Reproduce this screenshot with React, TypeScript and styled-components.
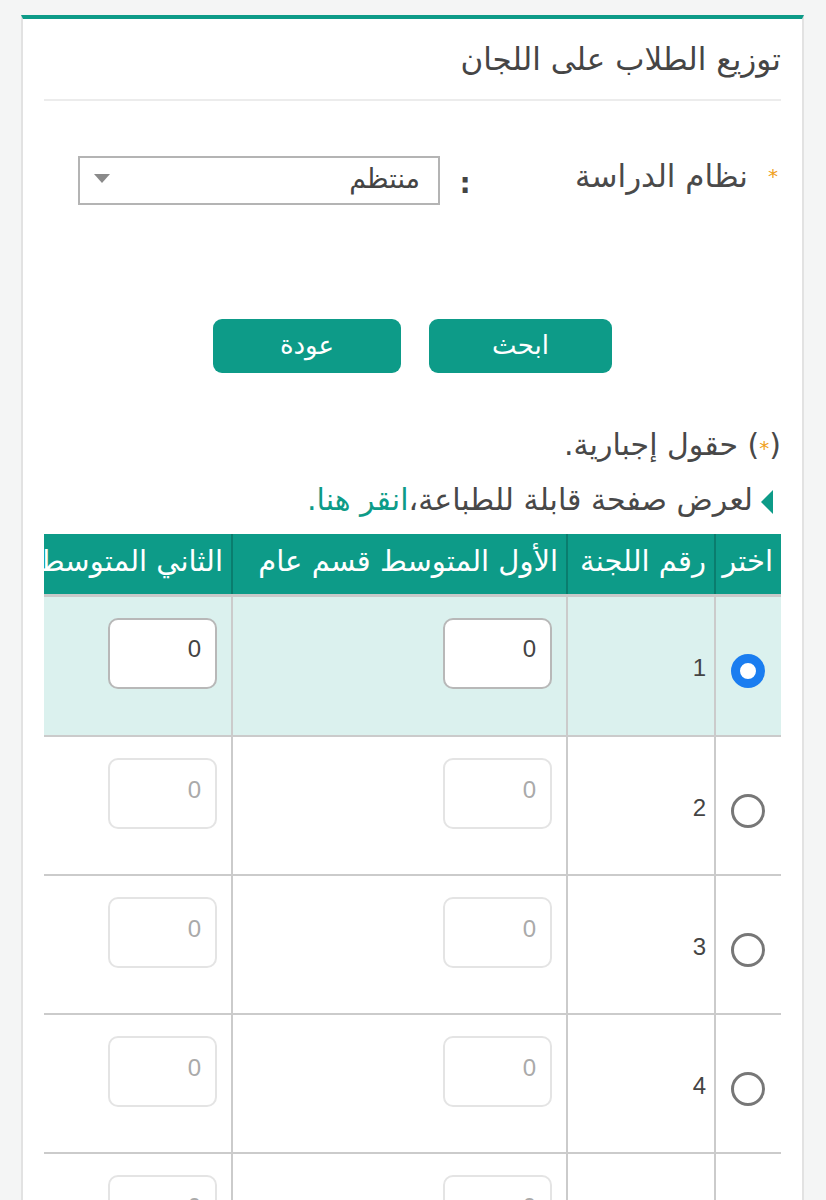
import React, { useState } from "react";
import styled, { createGlobalStyle } from "styled-components";

const GlobalStyle = createGlobalStyle`
  html, body {
    margin: 0;
    padding: 0;
    background: #f4f5f5;
  }
  body {
    font-family: "DejaVu Sans", sans-serif;
  }
`;

const TEAL = "#0d9b88";

const Page = styled.div`
  direction: rtl;
  padding: 15px 22px 0 21px;
  height: 1200px;
  box-sizing: border-box;
  overflow: hidden;
`;

const Card = styled.div`
  background: #fff;
  border-top: 4px solid ${TEAL};
  border-left: 2px solid #e2e2e2;
  border-right: 2px solid #e2e2e2;
  padding: 0 21px;
  min-height: 1300px;
`;

const Title = styled.h1`
  margin: 0;
  padding: 19px 0 19px;
  font-size: 31px;
  font-weight: normal;
  color: #454545;
  line-height: 42px;
  border-bottom: 2px solid #ececec;
`;

const FormRow = styled.div`
  display: grid;
  grid-template-columns: 291px 50px 362px;
  align-items: center;
  margin-top: 55px;
`;

const Label = styled.label`
  font-size: 31px;
  color: #4a4a4a;
  display: flex;
  gap: 20px;
  align-items: center;
  padding: 0 3px 10px 0;
`;

const Star = styled.span`
  color: #f0a020;
  font-size: 20px;
`;

const Colon = styled.span`
  font-size: 28px;
  color: #444;
  text-align: center;
  font-weight: bold;
  padding-top: 6px;
`;

const SelectBox = styled.div`
  height: 49px;
  box-sizing: border-box;
  border: 2px solid #b4b4b4;
  display: flex;
  align-items: center;
  justify-content: space-between;
  padding: 0 18px 4px 14px;
  font-size: 27px;
  color: #444;
`;

const Arrow = styled.span`
  width: 0;
  height: 0;
  border-left: 8px solid transparent;
  border-right: 8px solid transparent;
  border-top: 9px solid #8a8a8a;
`;

const ButtonRow = styled.div`
  display: flex;
  justify-content: center;
  gap: 28px;
  margin-top: 114px;
`;

const Button = styled.button<{ $w: number }>`
  width: ${(p) => p.$w}px;
  height: 54px;
  border: none;
  border-radius: 9px;
  background: ${TEAL};
  color: #fff;
  font-family: "DejaVu Sans", sans-serif;
  font-size: 26px;
  padding-bottom: 4px;
`;

const Note = styled.p`
  margin: 50px 0 0;
  font-size: 30px;
  color: #484848;
  line-height: 44px;
`;

const PrintLine = styled.p`
  margin: 8px 0 0;
  font-size: 30px;
  color: #484848;
  line-height: 44px;
  display: flex;
  align-items: center;
  gap: 8px;
  padding-right: 8px;
`;

const Pointer = styled.span`
  width: 0;
  height: 0;
  border-top: 12px solid transparent;
  border-bottom: 12px solid transparent;
  border-right: 12px solid ${TEAL};
  margin-top: 4px;
`;

const Link = styled.a`
  color: ${TEAL};
  text-decoration: none;
`;

const TableWrap = styled.div`
  margin-top: 12px;
  overflow: hidden;
  direction: rtl;
`;

const Table = styled.table`
  border-collapse: collapse;
  table-layout: fixed;
  width: 884px;
`;

const Th = styled.th<{ $w: number }>`
  width: ${(p) => p.$w}px;
  height: 61px;
  background: ${TEAL};
  color: #fff;
  font-weight: normal;
  font-size: 29px;
  text-align: right;
  padding: 0 8px 6px;
  white-space: nowrap;
  overflow: hidden;
  border-left: 2px solid #0a7d6e;
  border-bottom: 3px solid #c9c9c9;
  box-sizing: border-box;
`;

const Tr = styled.tr<{ $active: boolean }>`
  height: 139px;
  background: ${(p) => (p.$active ? "#dbf1ee" : "#fff")};
  &:first-child {
    height: 141px;
  }
`;

const Td = styled.td<{ $top?: boolean }>`
  border: 2px solid #cbcbcb;
  border-top: none;
  vertical-align: ${(p) => (p.$top ? "top" : "middle")};
  padding: ${(p) => (p.$top ? "21px 14px 0" : "0 8px")};
  text-align: right;
  font-family: "Liberation Sans", "DejaVu Sans", sans-serif;
  font-size: 24px;
  color: #444;
  &:first-child {
    border-right: none;
  }
`;

const NumInput = styled.input<{ $off: boolean }>`
  width: 109px;
  height: 71px;
  box-sizing: border-box;
  border-radius: 10px;
  border: 2px solid ${(p) => (p.$off ? "#e4e4e4" : "#b8b8b8")};
  background: #fff;
  text-align: right;
  padding: 0 14px 8px;
  font-family: "Liberation Sans", sans-serif;
  font-size: 24px;
  color: ${(p) => (p.$off ? "#aaa" : "#444")};
  outline: none;
`;

const Radio = styled.span<{ $on: boolean }>`
  display: inline-block;
  width: 34px;
  height: 34px;
  box-sizing: border-box;
  border-radius: 50%;
  margin: 16px 8px 0 0;
  border: ${(p) => (p.$on ? "9px solid #1a7df0" : "3px solid #777")};
  background: #fff;
  cursor: pointer;
`;

const RadioCell = styled(Td)`
  padding: 0 8px 0 0;
  text-align: right;
`;

const NumCell = styled(Td)`
  padding-top: 4px;
`;

const rows = [1, 2, 3, 4, 5];

export default function App() {
  const [selected, setSelected] = useState(1);
  return (
    <Page>
      <GlobalStyle />
      <Card>
        <Title>توزيع الطلاب على اللجان</Title>
        <FormRow>
          <Label>
            <Star>*</Star>
            نظام الدراسة
          </Label>
          <Colon>:</Colon>
          <SelectBox>
            <span>منتظم</span>
            <Arrow />
          </SelectBox>
        </FormRow>
        <ButtonRow>
          <Button $w={183}>ابحث</Button>
          <Button $w={188}>عودة</Button>
        </ButtonRow>
        <Note>
          (<Star>*</Star>) حقول إجبارية.
        </Note>
        <PrintLine>
          <Pointer />
          <span>
            لعرض صفحة قابلة للطباعة،<Link href="#">انقر هنا.</Link>
          </span>
        </PrintLine>
        <TableWrap>
          <Table>
            <thead>
              <tr>
                <Th $w={66}>اختر</Th>
                <Th $w={148}>رقم اللجنة</Th>
                <Th $w={335}>الأول المتوسط قسم عام</Th>
                <Th $w={335}>الثاني المتوسط قسم عام</Th>
              </tr>
            </thead>
            <tbody>
              {rows.map((n) => {
                const on = selected === n;
                return (
                  <Tr key={n} $active={on}>
                    <RadioCell>
                      <Radio $on={on} onClick={() => setSelected(n)} />
                    </RadioCell>
                    <NumCell>{n}</NumCell>
                    <Td $top>
                      <NumInput $off={!on} defaultValue="0" disabled={!on} />
                    </Td>
                    <Td $top>
                      <NumInput $off={!on} defaultValue="0" disabled={!on} />
                    </Td>
                  </Tr>
                );
              })}
            </tbody>
          </Table>
        </TableWrap>
      </Card>
    </Page>
  );
}
